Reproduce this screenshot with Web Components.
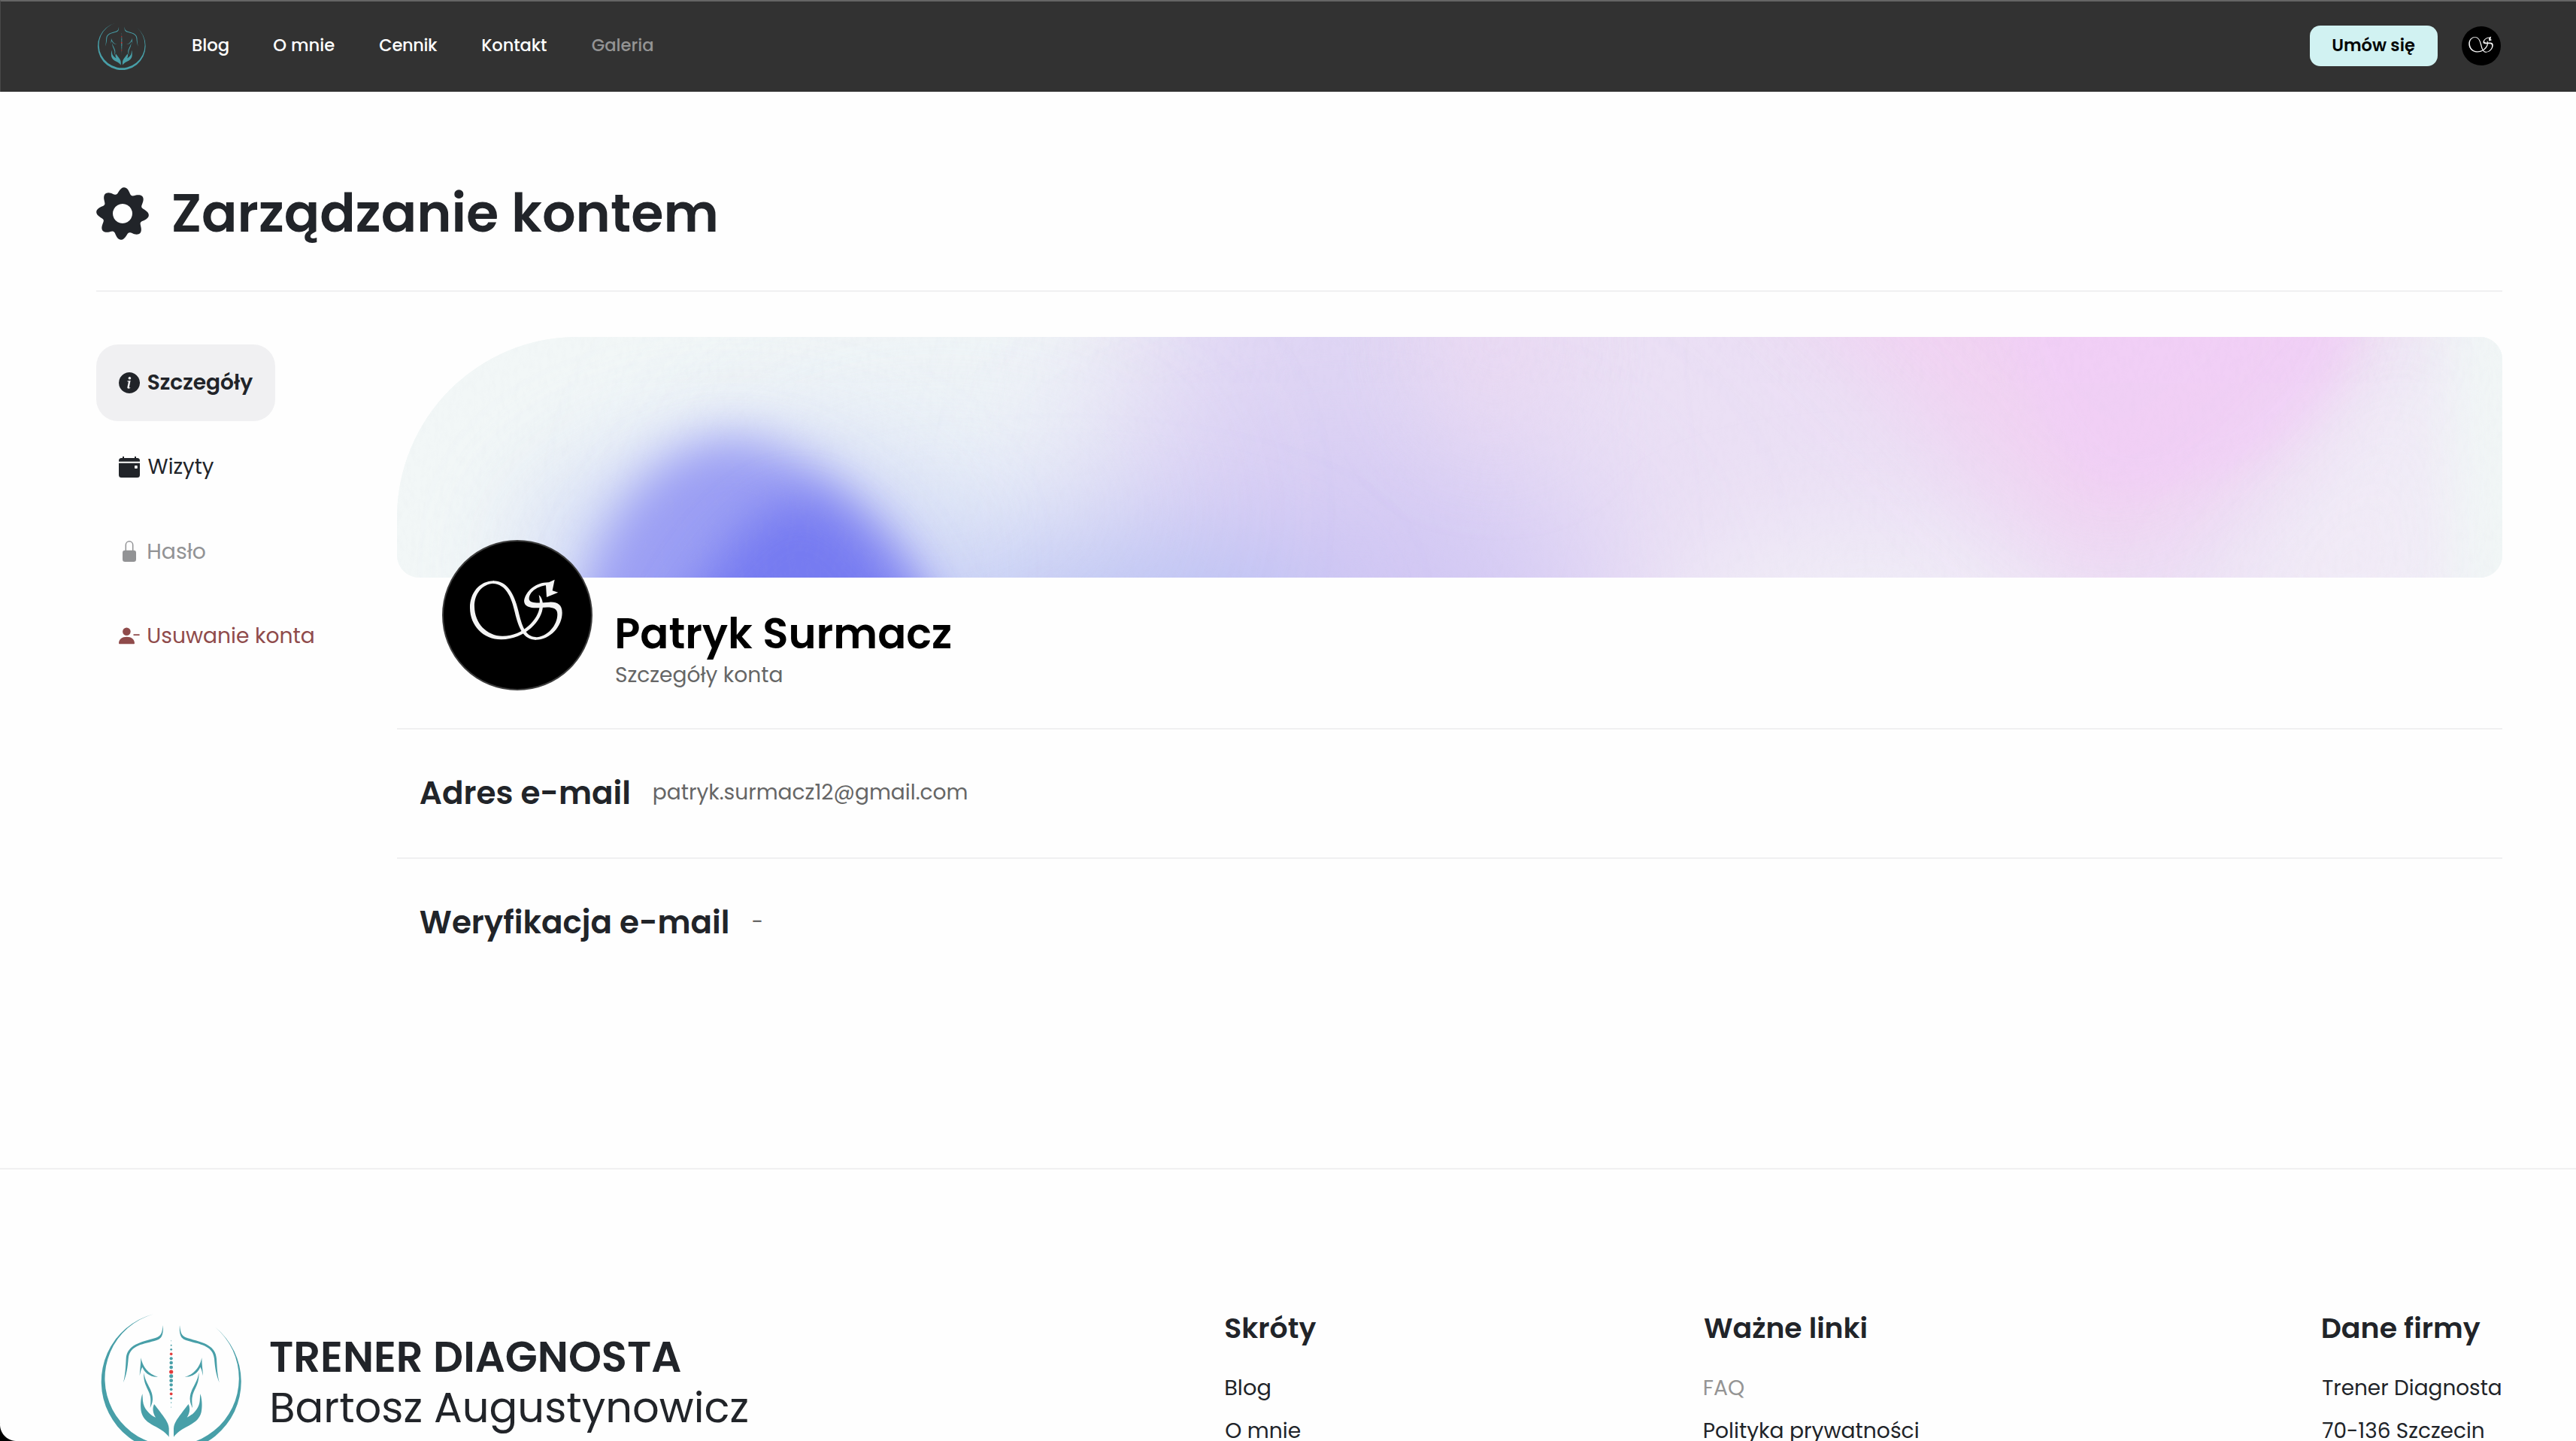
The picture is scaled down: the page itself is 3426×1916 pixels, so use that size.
<!DOCTYPE html>
<html lang="pl">
<head>
<meta charset="utf-8">
<title>Zarządzanie kontem</title>
<style>
html,body{margin:0;height:1916px;overflow:hidden;background:#fefefe}
body{font-family:Poppins,Inter,"Open Sans",sans-serif;color:#212429}
</style>
</head>
<body>
<account-page></account-page>
<script>
const define=(name,html,after)=>customElements.define(name,class extends HTMLElement{
  connectedCallback(){
    if(this.shadowRoot)return;
    const t=document.createElement('template');
    t.innerHTML=typeof html==='function'?html(this):html;
    this.attachShadow({mode:'open'}).append(t.content.cloneNode(true));
    if(after)after(this);
  }
});

/* Single line of text whose ink spans exactly `w` pixels, starting from size `s`. */
const ctx=document.createElement('canvas').getContext('2d');
define('fit-text',el=>`<style>
:host{display:inline-block;white-space:nowrap;flex:none;width:${el.getAttribute('w')}px;font-size:${el.getAttribute('s')}px;font-weight:${el.getAttribute('b')||400}}
span{display:inline-block}</style><span><slot></slot></span>`,el=>{
  const span=el.shadowRoot.querySelector('span'),cs=getComputedStyle(el),text=el.textContent,s=+el.getAttribute('s'),w=+el.getAttribute('w');
  /* measured at 10x so that side bearings are not rounded to whole pixels */
  ctx.font=`${cs.fontWeight} ${s*10}px ${cs.fontFamily}`;
  const m=ctx.measureText(text),left=-m.actualBoundingBoxLeft/10,right=(m.width-m.actualBoundingBoxRight)/10;
  const ink=span.getBoundingClientRect().width-left-right;
  const k=text.length>1?Math.min(1.06,Math.max(.94,w/ink)):1;
  el.style.fontSize=s*k+'px';
  if(text.length>1)span.style.letterSpacing=(w-ink*k)/(text.length-1)+'px';
  span.style.marginLeft=-left*k+'px';
});

const half=`<path d="M350,128C353,165 345,182 325,188C275,204 218,205 212,262C209,300 205,325 192,357C200,325 201,300 203,262C207,205 262,196 320,179C343,172 347,158 350,128Z"/>
<path d="M262,258C268,290 290,325 330,334C300,337 275,315 268,295C262,305 260,318 257,330C258,305 262,285 262,258Z"/>
<path d="M274,317C278,360 312,385 309,425C308,440 303,450 299,458C301,440 302,425 300,415C296,385 270,365 274,317Z"/>
<path d="M268,402C260,425 260,455 264,475C276,522 325,528 352,552C364,562 370,568 374,574L374,540C373,515 352,492 340,475C331,463 322,452 315,443C307,460 310,478 321,496C296,485 273,460 270,430C269,420 269,410 268,402Z"/>`;
const dots=[[190,1.5],[208,3],[225,4.2],[243,5.5,1],[261,6.3],[278,6.8],[296,7],[314,7.8,1],[331,7.6],[349,7.2],[366,6.6],[384,5.6],[402,5.6,1],[420,4.2],[437,2],[455,1.5]]
  .map(([y,r,red])=>`<circle cx="383" cy="${y}" r="${r}"${red?' fill="#e23b3b"':''}/>`).join('');
define('brand-logo',`<style>:host{display:block;flex:none}svg{display:block;width:100%;height:100%}</style>
<svg viewBox="87 53 596 596" fill="#489fa8">
<path d="M312,83.500A279,279 0 1 0 557,135A267.500,267.500 0 1 1 312,83.500Z"/>
<g>${half}</g><g transform="translate(767,0) scale(-1,1)">${half}</g>${dots}</svg>`);

define('user-avatar',`<style>:host{display:block;flex:none;box-sizing:border-box;border-radius:50%;background:#000;overflow:hidden}svg{display:block;width:100%;height:100%}</style>
<svg viewBox="6 6 588 588" fill="#f4f4f4">
<path d="M207,163C148,163 111,212 111,270C111,342 165,398 237,397C330,396 402,322 402,262C402,243 397,228 386,219C390,238 390,250 389,264C386,316 322,384 240,383C178,382 130,332 129,266C128,214 160,175 207,173Z"/>
<path d="M203,163C258,162 287,212 304,282C318,342 332,386 374,387V398C326,398 306,356 290,288C277,228 254,176 203,174Z"/>
<path d="M370,398C430,400 479,345 479,290C479,256 457,246 428,248C396,250 350,256 347,236C346,206 384,184 414,181L417,228L463,209L440,202L449,158L426,169C376,168 333,202 327,243C328,272 364,272 395,270C428,267 460,266 460,296C460,340 420,388 370,388Z"/></svg>`);

const gear=()=>{let d='';for(let i=0;i<360;i+=2){const a=i*Math.PI/180,r=31+4.1*Math.cos(8*(a-.07))-.2*Math.cos(16*(a-.07));d+=(i?'L':'M')+(35+r*Math.cos(a)).toFixed(2)+','+(35+r*Math.sin(a)).toFixed(2);}
  return `<path fill-rule="evenodd" d="${d}ZM35,22a13,13 0 1 0 .01,0Z"/>`;};
const icons={
 gear:['0 0 70 70',gear()],
 info:['0 0 28 28','<path fill-rule="evenodd" d="M14 0a14 14 0 1 0 .01 0ZM14.4 6a1.8 1.8 0 1 1-.01 0ZM11.3 11.4L15.6 11L13.9 19.7C13.7 20.6 14.5 20.5 15.3 20.1L15.1 20.9C13.4 22.2 10.9 22.1 11.4 19.7L12.7 13.3C12.9 12.4 12.4 12.3 11.2 12.2Z"/>'],
 calendar:['0 0 28 28','<path fill-rule="evenodd" d="M5 0h2v2h14V0h2v2h1.500a3.500 3.500 0 0 1 3.500 3.500V6.800H0V5.500A3.500 3.500 0 0 1 3.500 2H5ZM0 8.700H28V24.500A3.500 3.500 0 0 1 24.500 28H3.500A3.500 3.500 0 0 1 0 24.500ZM21.800 12a.8.800 0 0 0-.8.800v2.400a.8.800 0 0 0 .8.800h2.200a.8.800 0 0 0 .8-.8v-2.400a.8.800 0 0 0-.8-.8Z"/>'],
 lock:['0 0 28 28','<path fill="none" stroke="currentColor" stroke-width="1.500" d="M9.300 14V5.500a4.700 4.700 0 0 1 9.400 0V14"/><rect x="5" y="12.700" width="18" height="15.300" rx="3.300"/>'],
 minus:['0 0 28 28','<circle cx="10.400" cy="8.700" r="5.300"/><path d="M0 24.500C0 19 4.500 15.800 10.500 15.800S21 19 21 24.500L20.300 25.200H.7ZM19.500 12.200H27.600V13.900H19.500Z"/>']
};
define('ui-icon',el=>{const [vb,p]=icons[el.getAttribute('name')];
 return `<style>:host{display:block;flex:none;width:28px;height:28px}svg{display:block;width:100%;height:100%;fill:currentColor}</style><svg viewBox="${vb}">${p}</svg>`;});

define('cta-button',`<style>:host{display:flex;align-items:center;justify-content:center;box-sizing:border-box;width:170px;height:54px;padding-bottom:2px;border-radius:14px;background:#d1f2f2;color:#050707}</style><slot></slot>`);

define('top-bar',`<style>
:host{display:flex;align-items:center;box-sizing:border-box;height:122px;padding:0 100px 2px 127px;background:#323232;border-top:2px solid #656565;border-left:1px solid #484848;color:#fff}
brand-logo{width:68px;height:68px;margin-right:60.600px}
nav{display:flex;gap:60.500px;flex:1;padding-bottom:2px}
.off{color:#949494}
cta-button{margin-right:32px}
user-avatar{width:52px;height:52px}
</style>
<brand-logo></brand-logo>
<nav><fit-text s="24" b="500" w="47">Blog</fit-text><fit-text s="24" b="500" w="80.500">O mnie</fit-text><fit-text s="24" b="500" w="76.300">Cennik</fit-text><fit-text s="24" b="500" w="85">Kontakt</fit-text><fit-text class="off" s="24" b="500" w="80.500">Galeria</fit-text></nav>
<cta-button><fit-text s="24" b="600" w="108.500">Umów się</fit-text></cta-button>
<user-avatar></user-avatar>`);

define('page-title',`<style>
:host{display:flex;align-items:center;gap:33px;height:100px;margin-top:112px;padding-bottom:52px;border-bottom:2px solid #f0f0f1}
ui-icon{width:70px;height:70px}</style>
<ui-icon name="gear"></ui-icon><slot></slot>`);

define('side-item',`<style>
:host{display:flex;align-items:center;gap:11px;box-sizing:border-box;height:102px;padding:0 30px;border-radius:29px;align-self:flex-start}
:host([active]){background:#f0f0f2}
:host([disabled]){color:#929395}
:host([danger]){color:#8f4b4b}</style><slot name="icon"></slot><slot></slot>`);
define('side-menu',`<style>:host{display:flex;flex-direction:column;gap:10px;width:400px;padding-top:70px;flex:none}</style>
<side-item active><ui-icon slot="icon" name="info"></ui-icon><fit-text s="28" b="600" w="139.300">Szczegóły</fit-text></side-item>
<side-item><ui-icon slot="icon" name="calendar"></ui-icon><fit-text s="28" w="87.500">Wizyty</fit-text></side-item>
<side-item disabled><ui-icon slot="icon" name="lock"></ui-icon><fit-text s="28" w="76">Hasło</fit-text></side-item>
<side-item danger><ui-icon slot="icon" name="minus"></ui-icon><fit-text s="28" w="220">Usuwanie konta</fit-text></side-item>`);

define('cover-art',`<style>:host{display:block;height:320px;border-radius:240px 30px 30px 30px;overflow:hidden;background:#f1f7f6}svg{display:block;width:100%;height:100%}</style>
<svg viewBox="0 0 2800 320" preserveAspectRatio="none">
<defs>
<filter id="b120" x="-50%" y="-150%" width="200%" height="400%"><feGaussianBlur stdDeviation="120"/></filter>
<filter id="b70" x="-50%" y="-150%" width="200%" height="400%"><feGaussianBlur stdDeviation="65"/></filter>
<filter id="b30" x="-50%" y="-100%" width="200%" height="300%"><feGaussianBlur stdDeviation="32"/></filter>
<filter id="b14" x="-50%" y="-100%" width="200%" height="300%"><feGaussianBlur stdDeviation="19"/></filter>
<filter id="grain" x="0" y="0" width="100%" height="100%"><feTurbulence type="fractalNoise" baseFrequency=".16 .07" numOctaves="3" seed="4"/><feColorMatrix values="0 0 0 0 .5  0 0 0 0 .5  0 0 0 0 .6  .5 .5 0 0 -.42"/></filter>
</defs>
<rect width="2800" height="320" fill="#f2f7f7"/>
<path filter="url(#b120)" fill="#ebe0f5" d="M1110,-400H2700L2640,720H900Z"/>
<path filter="url(#b120)" fill="#dfd5f4" d="M1110,-260H1400L1480,560H850Z"/>
<ellipse filter="url(#b120)" cx="1260" cy="370" rx="340" ry="190" fill="#cfc5f4"/>
<ellipse filter="url(#b70)" cx="880" cy="390" rx="360" ry="135" fill="#bcc3f4"/>
<ellipse filter="url(#b120)" cx="720" cy="230" rx="300" ry="120" fill="#dde4f7" opacity=".7"/>
<ellipse filter="url(#b70)" cx="1960" cy="370" rx="270" ry="120" fill="#f0ecf7"/>
<ellipse filter="url(#b70)" cx="1460" cy="0" rx="100" ry="140" fill="#edd9f2" opacity=".6"/>
<ellipse filter="url(#b70)" cx="450" cy="300" rx="290" ry="170" fill="#ccd5f6" opacity=".8"/>
<path filter="url(#b30)" fill="#9b9ff4" d="M225,420C255,260 330,150 435,135C555,135 680,260 745,420Z"/>
<path filter="url(#b30)" fill="#7074f1" d="M310,500C390,330 470,205 550,215C630,250 690,330 750,500Z" opacity=".85"/>
<path filter="url(#b70)" fill="#f2d0f2" opacity=".85" d="M1760,-160H2640C2660,60 2500,170 2370,270L2240,310C2100,180 1980,60 1760,-160Z"/>
<path filter="url(#b14)" fill="#f1cdf8" opacity=".55" d="M2130,-80H2600C2620,60 2540,150 2400,190C2330,210 2280,215 2240,180C2180,120 2140,30 2130,-80Z"/>
<path filter="url(#b70)" fill="#f2ecf7" opacity=".9" d="M2700,20L2730,420H2380C2460,270 2560,190 2700,20Z"/>
<path filter="url(#b30)" fill="#f1f6f6" d="M2750,-100H2900V420H2750Z"/>
<rect width="2800" height="320" filter="url(#grain)" opacity=".11"/>
</svg>`);

define('profile-head',`<style>
:host{display:flex;gap:32px;margin-top:-50px;padding:0 0 50px 60px;border-bottom:2px solid #f0f0f1}
user-avatar{width:200px;height:200px;border:2px solid #3c3c3c}
.who{display:flex;flex-direction:column;padding-top:95px}
.name{color:#000;line-height:60px;margin:0 0 4px .7px}
.sub{color:#666;line-height:40px;margin-left:-.8px}</style>
<user-avatar></user-avatar>
<div class="who"><fit-text class="name" s="56" b="600" w="444">Patryk Surmacz</fit-text><fit-text class="sub" s="28" w="220.500">Szczegóły konta</fit-text></div>`);

define('detail-row',`<style>
:host{display:flex;align-items:center;gap:33px;height:168px;padding:0 0 2px 30.500px}
:host([ruled]){border-bottom:2px solid #f0f0f1}
::slotted([slot=value]){color:#666}</style><slot name="label"></slot><slot name="value"></slot>`);

define('footer-column',`<style>:host{display:flex;flex-direction:column;line-height:57px}
::slotted([slot=head]){line-height:50px;margin-bottom:26px}
::slotted([off]){color:#949494}</style><slot name="head"></slot><slot></slot>`);

define('site-footer',`<style>
:host{display:grid;grid-template-columns:1501px 636.500px 822.500px auto;box-sizing:border-box;height:363px;padding:186px 98px 0 129px;border-top:2px solid #f0f0f1;overflow:hidden}
.brand{display:flex;gap:32px;align-items:flex-start;margin-top:-4px}
brand-logo{width:198.700px;height:198.700px}
.txt{display:flex;flex-direction:column;line-height:67px;padding-top:34px}
.second{margin-left:2px}</style>
<div class="brand"><brand-logo></brand-logo><div class="txt"><fit-text s="56" b="600" w="546">TRENER DIAGNOSTA</fit-text><fit-text class="second" s="56" w="632.500">Bartosz Augustynowicz</fit-text></div></div>
<footer-column><fit-text slot="head" s="40" b="600" w="120.500">Skróty</fit-text><fit-text s="28" w="59">Blog</fit-text><fit-text s="28" w="99">O mnie</fit-text></footer-column>
<footer-column><fit-text slot="head" s="40" b="600" w="216">Ważne linki</fit-text><fit-text off s="28" w="53">FAQ</fit-text><fit-text s="28" w="284.500">Polityka prywatności</fit-text></footer-column>
<footer-column><fit-text slot="head" s="40" b="600" w="210">Dane firmy</fit-text><fit-text s="28" w="237">Trener Diagnosta</fit-text><fit-text s="28" w="214">70-136 Szczecin</fit-text></footer-column>`);

define('window-corner',`<style>:host{position:absolute;left:0;bottom:0;width:22px;height:24px;background:radial-gradient(circle at 22px 2px,transparent 21.500px,#000 22.500px)}</style>`);

define('account-page',`<style>
:host{display:flex;flex-direction:column;width:3426px;height:1916px;position:relative;overflow:hidden}
main{height:1431px;padding:0 98px 0 128px;display:flow-root}
.cols{display:flex}
section{flex:1;min-width:0;margin-top:60px}</style>
<top-bar></top-bar>
<main>
<page-title><fit-text s="72" b="600" w="720.500">Zarządzanie kontem</fit-text></page-title>
<div class="cols"><side-menu></side-menu>
<section><cover-art></cover-art><profile-head></profile-head>
<detail-row ruled><fit-text slot="label" s="42" b="600" w="278">Adres e-mail</fit-text><fit-text slot="value" s="28" w="416.500">patryk.surmacz12@gmail.com</fit-text></detail-row>
<detail-row><fit-text slot="label" s="42" b="600" w="409.500">Weryfikacja e-mail</fit-text><fit-text slot="value" s="28" w="12">-</fit-text></detail-row>
</section></div>
</main>
<site-footer></site-footer>
<window-corner></window-corner>`);
</script>
</body>
</html>
